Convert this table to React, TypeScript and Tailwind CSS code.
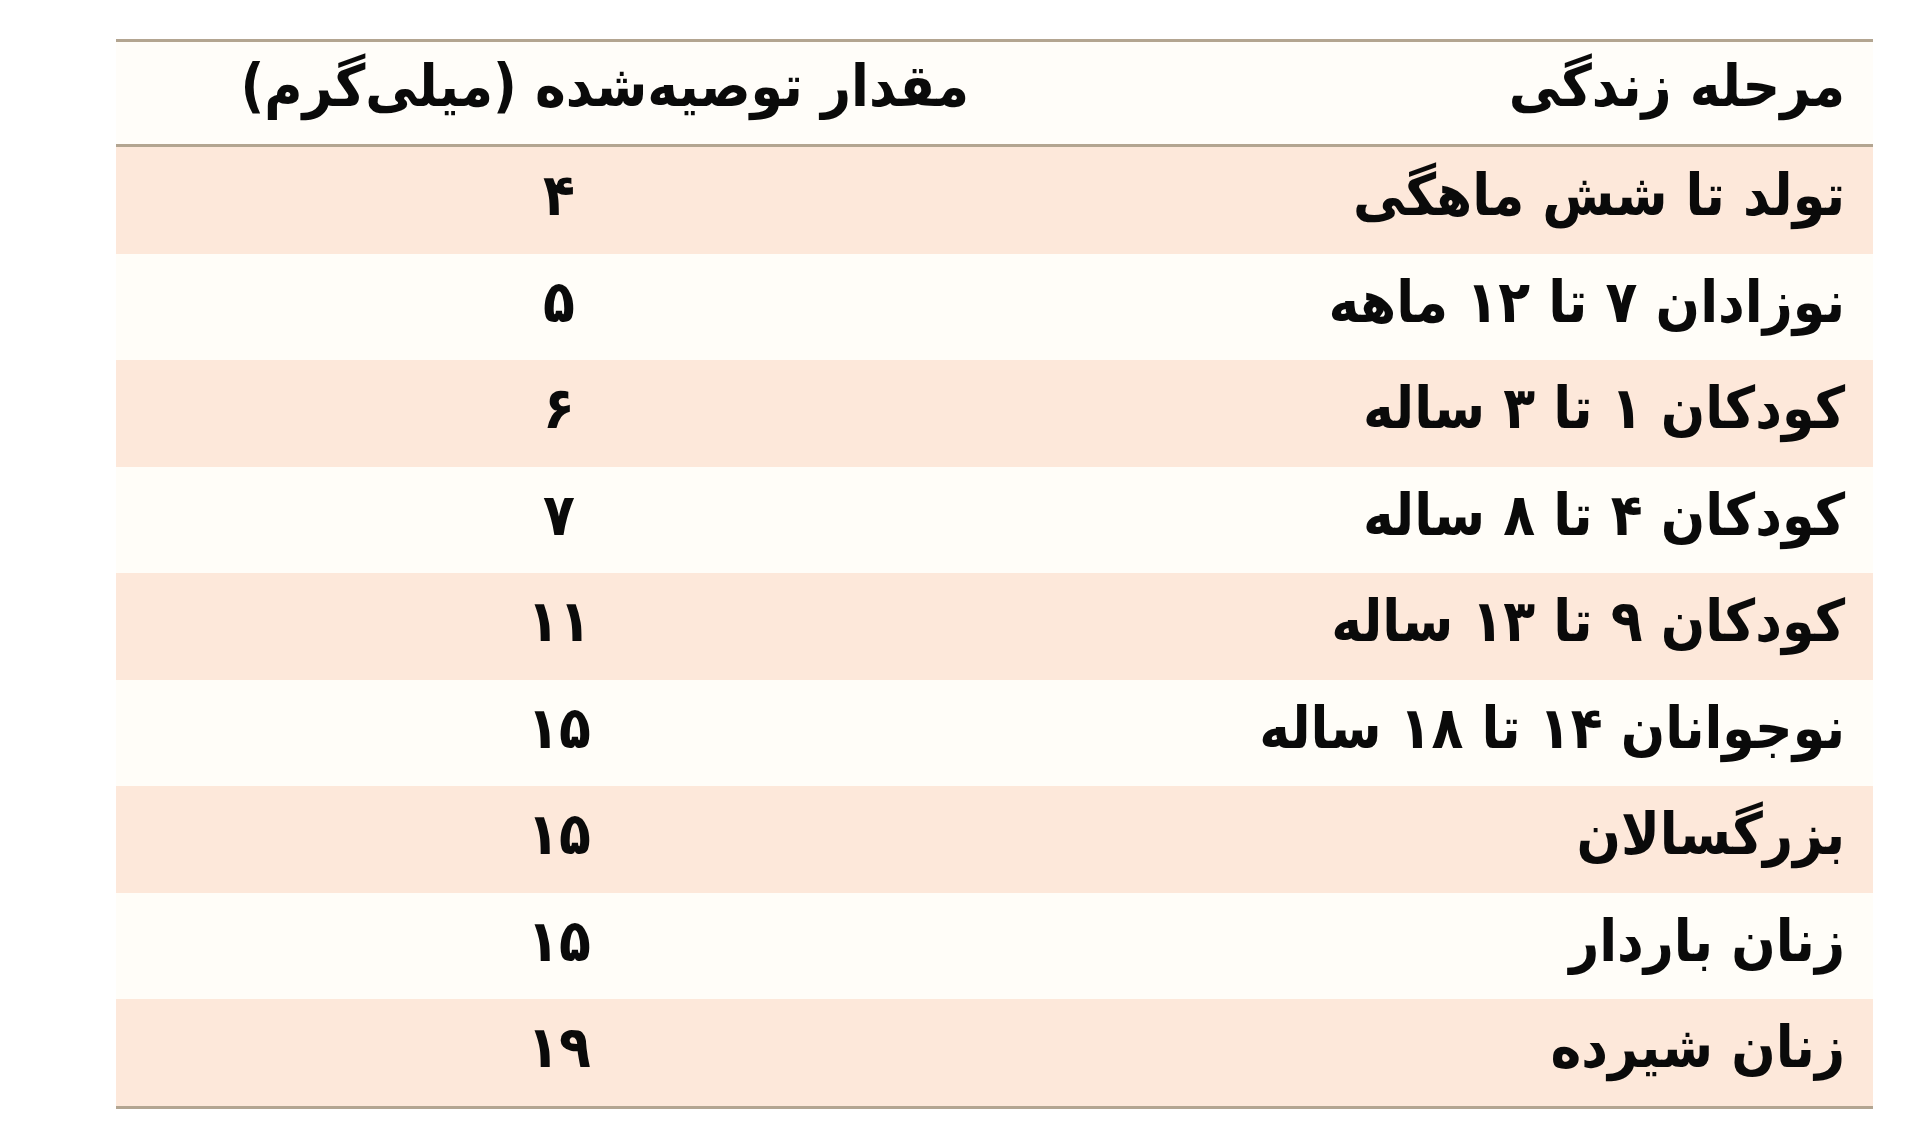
const rows = [
  { stage: 'تولد تا شش ماهگی', amount: '۴' },
  { stage: 'نوزادان ۷ تا ۱۲ ماهه', amount: '۵' },
  { stage: 'کودکان ۱ تا ۳ ساله', amount: '۶' },
  { stage: 'کودکان ۴ تا ۸ ساله', amount: '۷' },
  { stage: 'کودکان ۹ تا ۱۳ ساله', amount: '۱۱' },
  { stage: 'نوجوانان ۱۴ تا ۱۸ ساله', amount: '۱۵' },
  { stage: 'بزرگسالان', amount: '۱۵' },
  { stage: 'زنان باردار', amount: '۱۵' },
  { stage: 'زنان شیرده', amount: '۱۹' },
];

const App = () => {
  return (
    <div
      dir="rtl"
      className="min-h-[1130px] w-[1920px] bg-white pt-[39px] pr-[47px] pl-[116px] text-[#0a0a0a] font-['DejaVu_Sans_Condensed','DejaVu_Sans',sans-serif] font-bold"
    >
      <div className="border-t-[3px] border-b-[3px] border-[#b3a591]">
        {/* Header */}
        <div className="grid grid-cols-[871px_1fr] h-[105px] items-center pb-[14px] border-b-[3px] border-[#b3a591] bg-[#fffdf9]">
          <div className="pr-[28px] text-[58px] leading-none">مرحله زندگی</div>
          <div className="pr-[33px] text-[58px] leading-none">مقدار توصیه‌شده (میلی‌گرم)</div>
        </div>

        {rows.map((row, i) => (
          <div
            key={i}
            className={`grid grid-cols-[871px_1fr] h-[106.5px] items-center pb-[10px] ${
              i % 2 === 0 ? 'bg-[#fde8da]' : 'bg-[#fffdf8]'
            }`}
          >
            <div className="pr-[28px] text-[58px] leading-none">{row.stage}</div>
            <div className="text-center text-[58px] leading-none">{row.amount}</div>
          </div>
        ))}
      </div>
    </div>
  );
};

export default App;
